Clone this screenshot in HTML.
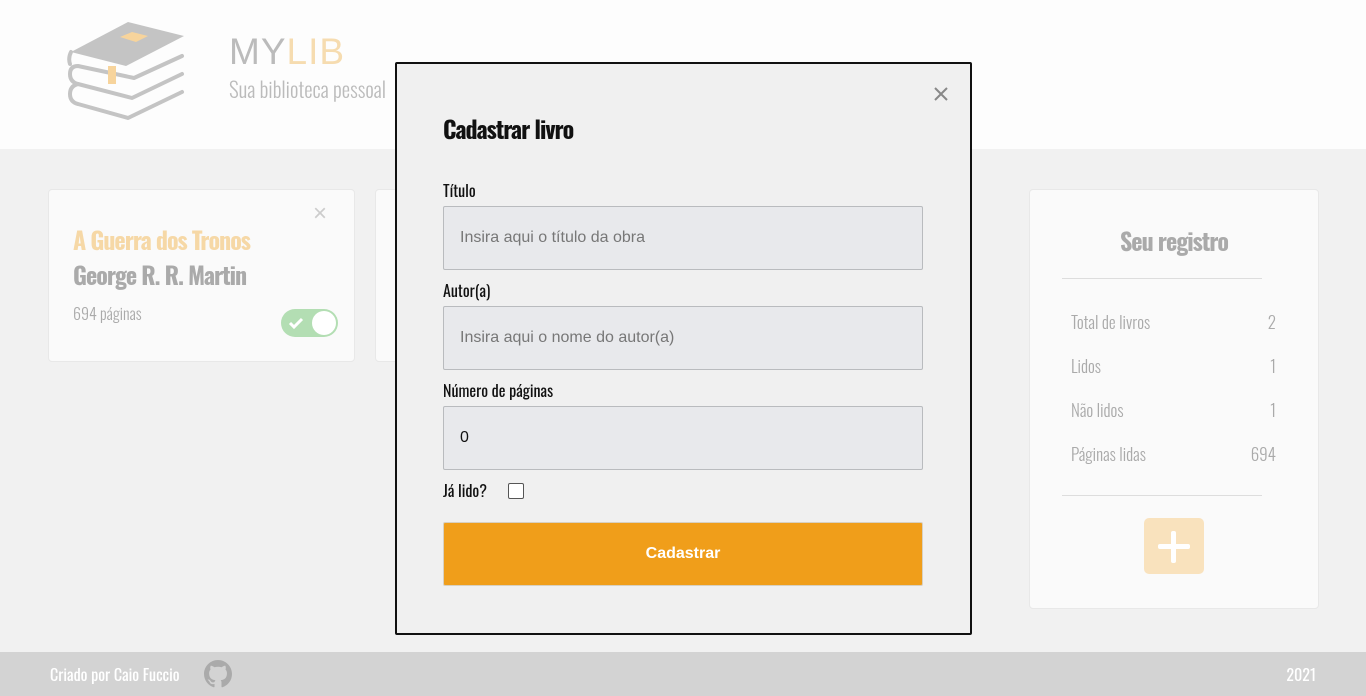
<!DOCTYPE html>
<html><head><meta charset="utf-8"><style>
*{box-sizing:border-box;margin:0;padding:0}
body{width:1366px;height:696px;overflow:hidden;background:#f1f1f1;font-family:"Oswald","Liberation Sans Narrow","DejaVu Sans Condensed","Liberation Sans",sans-serif;position:relative}
header{position:absolute;left:0;top:0;width:1366px;height:149px;background:#fdfdfd}
.card{position:absolute;background:#fafafa;border:1px solid #e8e8e8;border-radius:4px}
footer{position:absolute;left:0;top:652px;width:1366px;height:44px;background:#d3d3d3;color:#fff;font-size:16px;font-weight:400}
.modal{position:absolute;left:395px;top:62px;width:577px;height:573px;background:#f0f0f0;border:2px solid #111;border-radius:2px}
.lbl{position:absolute;left:46px;font-size:16px;color:#111;font-weight:400}
.inp{position:absolute;left:46px;width:480px;height:64px;background:#e8e9ec;border:1px solid #b9bbbe;border-radius:2px;font-family:"Liberation Sans",sans-serif;font-size:16px;color:#777;padding-left:16px;line-height:62px}
.row{position:absolute;left:41px;width:205px;font-size:17px;font-weight:300;color:#aaa;display:flex;justify-content:space-between}
.tt{font-size:24px;font-weight:700;letter-spacing:-1px}
</style></head><body>
<header>
<svg style="position:absolute;left:66px;top:20px" width="122" height="102" viewBox="0 0 122 102">
<polygon points="5,32 62,2 118,16 60,46" fill="#c4c4c4"/>
<polygon points="54,17 66,12 82,16 70,22" fill="#f7d49c"/>
<g fill="none" stroke="#c4c4c4" stroke-width="4" stroke-linecap="round" stroke-linejoin="round">
<path d="M116,36 L68,58 L12,46 Q4,46 4,54 Q4,62 12,64 L66,78 L116,54"/>
<path d="M12,64 Q4,66 4,74 Q4,82 12,84 L62,98 L116,72"/>
<path d="M5,32 Q2,38 4,44"/>
</g>
<rect x="42" y="46" width="8" height="18" fill="#f7d49c"/>
</svg>
<div style="position:absolute;left:229px;top:31px;font-family:'Liberation Sans',sans-serif;font-size:37px;color:#bbb;letter-spacing:1px">MY<span style="color:#f6dcb0">LIB</span></div>
<div style="position:absolute;left:229px;top:74px;font-size:21px;font-weight:300;color:#bbb">Sua biblioteca pessoal</div>
</header>

<div class="card" style="left:48px;top:189px;width:307px;height:173px">
<div style="position:absolute;left:264px;top:10px;font-size:24px;color:#ccc;font-family:'Liberation Sans',sans-serif">×</div>
<div class="tt" style="position:absolute;left:24px;top:31px;color:#f6d8a6">A Guerra dos Tronos</div>
<div class="tt" style="position:absolute;left:24px;top:66px;color:#aaa">George R. R. Martin</div>
<div style="position:absolute;left:24px;top:111px;font-size:16px;font-weight:300;color:#aaa">694 páginas</div>
<div style="position:absolute;left:232px;top:119px;width:57px;height:28px;border-radius:14px;background:#b3deb3"><svg style="position:absolute;left:7px;top:7px" width="16" height="14"><path d="M2,7 L6,11 L14,3" stroke="#fff" stroke-width="3" fill="none"/></svg><div style="position:absolute;right:2px;top:2px;width:24px;height:24px;border-radius:50%;background:#fff"></div></div>
</div>
<div class="card" style="left:375px;top:189px;width:40px;height:173px"></div>

<div class="card" style="left:1029px;top:189px;width:290px;height:420px">
<div class="tt" style="position:absolute;left:0;width:100%;top:32px;text-align:center;color:#aaa">Seu registro</div>
<div style="position:absolute;left:32px;top:88px;width:200px;border-top:1px solid #ddd"></div>
<div class="row" style="top:119px"><span>Total de livros</span><span>2</span></div>
<div class="row" style="top:163px"><span>Lidos</span><span>1</span></div>
<div class="row" style="top:207px"><span>Não lidos</span><span>1</span></div>
<div class="row" style="top:251px"><span>Páginas lidas</span><span>694</span></div>
<div style="position:absolute;left:32px;top:305px;width:200px;border-top:1px solid #ddd"></div>
<div style="position:absolute;left:114px;top:328px;width:60px;height:56px;border-radius:5px;background:#f9e2bd"><div style="position:absolute;left:14px;top:26px;width:32px;height:5px;background:#fff;border-radius:2px"></div><div style="position:absolute;left:27px;top:13px;width:5px;height:32px;background:#fff;border-radius:2px"></div></div>
</div>

<footer>
<div style="position:absolute;left:50px;top:10px">Criado por Caio Fuccio</div>
<svg style="position:absolute;left:204px;top:8px" width="28" height="28" viewBox="0 0 16 16"><path fill="#aaa" d="M8 0C3.58 0 0 3.58 0 8c0 3.54 2.290 6.53 5.470 7.590.4.07.55-.17.55-.38 0-.19-.01-.82-.01-1.49-2.010.37-2.530-.49-2.690-.94-.09-.23-.48-.94-.82-1.130-.28-.15-.68-.52-.01-.53.63-.01 1.080.58 1.230.82.72 1.210 1.870.87 2.330.66.07-.52.28-.87.51-1.070-1.780-.2-3.640-.89-3.640-3.950 0-.87.31-1.590.82-2.150-.08-.2-.36-1.020.08-2.120 0 0 .67-.21 2.200.82.64-.18 1.320-.27 2-.27.68 0 1.360.09 2 .27 1.530-1.040 2.200-.82 2.200-.82.44 1.100.16 1.920.08 2.120.51.56.82 1.270.82 2.150 0 3.070-1.870 3.750-3.650 3.950.29.25.54.73.54 1.480 0 1.070-.01 1.930-.01 2.200 0 .21.15.46.55.38A8.013 8.013 0 0016 8c0-4.420-3.580-8-8-8z"/></svg>
<div style="position:absolute;right:50px;top:10px">2021</div>
</footer>

<div class="modal">
<svg style="position:absolute;left:536px;top:22px" width="16" height="16"><path d="M2,2 L14,14 M14,2 L2,14" stroke="#888" stroke-width="2"/></svg>
<div class="tt" style="position:absolute;left:46px;top:46px;color:#111">Cadastrar livro</div>
<div class="lbl" style="top:114px">Título</div>
<div class="inp" style="top:142px">Insira aqui o título da obra</div>
<div class="lbl" style="top:214px">Autor(a)</div>
<div class="inp" style="top:242px">Insira aqui o nome do autor(a)</div>
<div class="lbl" style="top:314px">Número de páginas</div>
<div class="inp" style="top:342px;color:#111">0</div>
<div class="lbl" style="top:414px">Já lido?</div>
<div style="position:absolute;left:111px;top:419px;width:16px;height:16px;border:1px solid #555;border-radius:2px;background:#fff"></div>
<div style="position:absolute;left:46px;top:458px;width:480px;height:64px;background:#f09e1a;border:1px solid #d8d0c0;border-radius:2px;color:#fff;font-family:'Liberation Sans',sans-serif;font-weight:bold;font-size:16px;text-align:center;line-height:62px">Cadastrar</div>
</div>
</body></html>
